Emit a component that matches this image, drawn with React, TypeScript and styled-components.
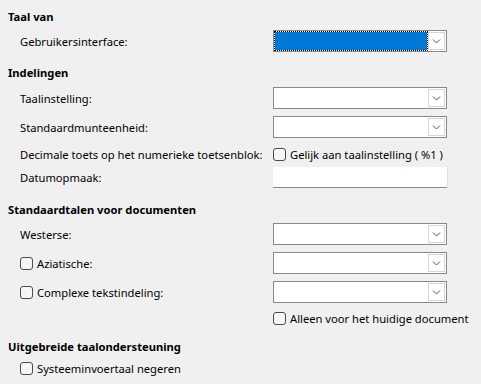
import React from 'react'
import styled, { createGlobalStyle } from 'styled-components'

const GlobalStyle = createGlobalStyle`
  html, body {
    margin: 0;
    padding: 0;
    background: #f0f0f0;
  }
  body {
    font-family: 'Noto Sans', 'Open Sans', sans-serif;
    font-size: 11.2px;
    color: #000;
  }
`

const Page = styled.div`
  width: 481px;
  height: 384px;
  box-sizing: border-box;
  padding: 8px 8px 0 8px;
  overflow: hidden;
`

const Section = styled.section<{ $top?: number }>`
  display: flex;
  flex-direction: column;
  margin-top: ${(p) => p.$top ?? 0}px;
`

const Heading = styled.div`
  height: 18px;
  line-height: 18px;
  font-weight: 700;
  white-space: nowrap;
`

const Row = styled.div<{ $top?: number; $height?: number }>`
  display: grid;
  grid-template-columns: 253px 174px;
  align-items: center;
  height: ${(p) => p.$height ?? 22}px;
  margin-top: ${(p) => p.$top ?? 7}px;
  padding-left: 12px;
`

const Label = styled.span`
  white-space: nowrap;
`

const CheckLabel = styled.label`
  display: flex;
  align-items: center;
  gap: 4px;
  white-space: nowrap;
`

const Box = styled.span`
  display: inline-block;
  width: 11px;
  height: 11px;
  border: 1px solid #4b4b4b;
  border-radius: 3px;
  background: #f6f6f6;
  flex-shrink: 0;
`

const Combo = styled.div`
  display: flex;
  height: 22px;
  box-sizing: border-box;
  border: 1px solid #868a8e;
  background: #fff;
`

const ComboField = styled.div<{ $focused?: boolean }>`
  flex: 1;
  ${(p) =>
    p.$focused &&
    `
    border: 1px dotted #000;
    background: #0078d7;
    background-clip: padding-box;
  `}
`

const ComboButton = styled.div`
  width: 17px;
  margin: 1px 1px 1px 0;
  box-sizing: border-box;
  border: 1px solid #d6d6d6;
  background: #fff;
  display: flex;
  align-items: center;
  justify-content: center;
`

const TextField = styled.div`
  height: 21px;
  box-sizing: border-box;
  background: #fff;
  border-bottom: 1px solid #8a8a8a;
  box-shadow: 1px 0 0 #e2e2e2;
`

const Chevron = () => (
  <svg width="9" height="6" viewBox="0 0 9 6">
    <path d="M1 1.5 L4.5 5 L8 1.5" fill="none" stroke="#555" strokeWidth="1" />
  </svg>
)

const Dropdown = ({ focused }: { focused?: boolean }) => (
  <Combo>
    <ComboField $focused={focused} />
    <ComboButton>
      <Chevron />
    </ComboButton>
  </Combo>
)

const Check = ({ children }: { children: React.ReactNode }) => (
  <CheckLabel>
    <Box />
    {children}
  </CheckLabel>
)

export default function App() {
  return (
    <Page>
      <GlobalStyle />
      <Section>
        <Heading>Taal van</Heading>
        <Row $top={4}>
          <Label>Gebruikersinterface:</Label>
          <Dropdown focused />
        </Row>
      </Section>

      <Section $top={12}>
        <Heading>Indelingen</Heading>
        <Row $top={5}>
          <Label>Taalinstelling:</Label>
          <Dropdown />
        </Row>
        <Row>
          <Label>Standaardmunteenheid:</Label>
          <Dropdown />
        </Row>
        <Row $height={18}>
          <Label>Decimale toets op het numerieke toetsenblok:</Label>
          <Check>Gelijk aan taalinstelling ( %1 )</Check>
        </Row>
        <Row $top={4} $height={21}>
          <Label>Datumopmaak:</Label>
          <TextField />
        </Row>
      </Section>

      <Section $top={13}>
        <Heading>Standaardtalen voor documenten</Heading>
        <Row $top={4}>
          <Label>Westerse:</Label>
          <Dropdown />
        </Row>
        <Row>
          <Check>Aziatische:</Check>
          <Dropdown />
        </Row>
        <Row>
          <Check>Complexe tekstindeling:</Check>
          <Dropdown />
        </Row>
        <Row $top={6} $height={18}>
          <span />
          <Check>Alleen voor het huidige document</Check>
        </Row>
      </Section>

      <Section $top={11}>
        <Heading>Uitgebreide taalondersteuning</Heading>
        <Row $top={3} $height={18}>
          <Check>Systeeminvoertaal negeren</Check>
        </Row>
      </Section>
    </Page>
  )
}
